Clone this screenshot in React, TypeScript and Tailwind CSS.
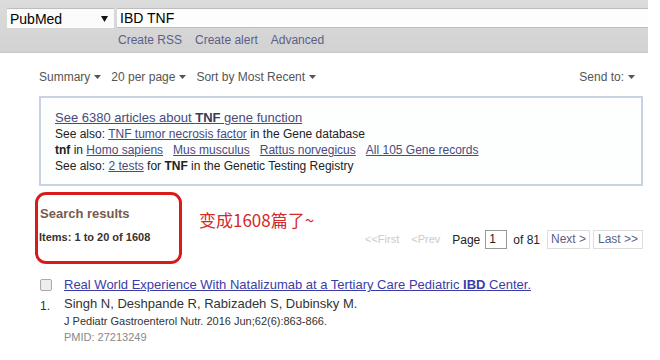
import React from 'react';

const Caret = () => (
    <svg width="7" height="4" viewBox="0 0 7 4" className="inline-block ml-[4px] mb-[1px]">
        <path d="M0 0 L7 0 L3.5 4 Z" fill="#555" />
    </svg>
);

const App = () => {
    return (
        <div className="w-[660px] h-[360px] bg-white overflow-hidden font-['Liberation_Sans',Arial,sans-serif]">
            {/* search bar */}
            <div className="w-[648px] h-[53px] bg-[#d4d4d4] border-b border-[#c6c6c6] bg-gradient-to-b from-[#dcdcdc] to-[#d2d2d2]">
                <div className="flex pt-[8px]">
                    <div className="ml-[7px] w-[107px] h-[20px] bg-[#fbfbfb] border-t border-[#bdbdbd] flex items-center justify-between pl-[3px] pr-[6px]">
                        <span className="text-[14px] text-black leading-none">PubMed</span>
                        <svg width="7" height="6" viewBox="0 0 7 6"><path d="M0 0 L7 0 L3.5 6 Z" fill="#111" /></svg>
                    </div>
                    <div className="ml-[3px] flex-1 h-[20px] bg-[#fcfdfc] border-y border-[#bdbdbd] flex items-center pl-[3px]">
                        <span className="text-[14px] text-black leading-none">IBD TNF</span>
                    </div>
                </div>
                <div className="flex gap-[13px] pl-[118px] mt-[3px] text-[12px] text-[#5b5f88]">
                    <span>Create RSS</span>
                    <span>Create alert</span>
                    <span>Advanced</span>
                </div>
            </div>

            <div className="pl-[39px] pr-[17px]">
                {/* display settings */}
                <div className="flex justify-between mt-[16px] text-[12px] text-[#555] h-[16px] items-center">
                    <div className="flex gap-[10px]">
                        <span>Summary<Caret /></span>
                        <span>20 per page<Caret /></span>
                        <span>Sort by Most Recent<Caret /></span>
                    </div>
                    <span className="mr-[8px]">Send to:<Caret /></span>
                </div>

                {/* gene sensor box */}
                <div className="mt-[11px] w-[604px] h-[90px] border-2 border-[#c8d2e2] bg-[#fdfefe] pl-[14px] pt-[12px] text-[12px] leading-[16px] text-[#222]">
                    <div className="text-[13px] leading-[16px] text-[#4a4a7c] underline">See 6380 articles about <b className="text-[#3a3a5c]">TNF</b> gene function</div>
                    <div>See also: <span className="underline text-[#4a4a7c]">TNF tumor necrosis factor</span> in the Gene database</div>
                    <div>
                        <b>tnf</b> in <span className="underline text-[#4a4a7c]">Homo sapiens</span>
                        <span className="underline text-[#4a4a7c] ml-[10px]">Mus musculus</span>
                        <span className="underline text-[#4a4a7c] ml-[10px]">Rattus norvegicus</span>
                        <span className="underline text-[#4a4a7c] ml-[10px]">All 105 Gene records</span>
                    </div>
                    <div>See also: <span className="underline text-[#4a4a7c]">2 tests</span> for <b>TNF</b> in the Genetic Testing Registry</div>
                </div>

                {/* results header */}
                <div className="flex items-start mt-[6px]">
                    <div className="-ml-[4px] w-[147px] h-[72px] border-[3px] border-[#d91a1a] rounded-[11px] pl-[2px] pt-[11px]">
                        <div className="text-[13px] font-bold text-[#7a5a4c] leading-[16px]">Search results</div>
                        <div className="text-[11px] font-bold text-[#3a3330] mt-[9px] leading-[13px] -ml-[1px]">Items: 1 to 20 of 1608</div>
                    </div>
                    <div className="ml-[17px] mt-[18px] text-[17px] text-[#d42a2a] leading-[20px] font-['Noto_Sans_CJK_SC',sans-serif]">变成1608篇了~</div>
                    <div className="ml-auto mt-[38px] flex items-center">
                        <span className="text-[11px] text-[#cbcbcb]">&lt;&lt;First</span>
                        <span className="text-[11px] text-[#cbcbcb] ml-[12px]">&lt;Prev</span>
                        <span className="text-[12px] text-[#222] ml-[12px]">Page</span>
                        <span className="ml-[5px] w-[22px] h-[19px] border border-[#999] text-[12px] text-[#222] pl-[3px] leading-[17px]">1</span>
                        <span className="text-[12px] text-[#222] ml-[6px]">of 81</span>
                        <span className="ml-[7px] w-[43px] h-[19px] text-center border border-[#ddd] text-[12px] text-[#5b5f88] leading-[17px]">Next &gt;</span>
                        <span className="ml-[3px] w-[50px] h-[19px] text-center border border-[#ddd] text-[12px] text-[#5b5f88] leading-[17px]">Last &gt;&gt;</span>
                    </div>
                </div>

                {/* result item */}
                <div className="flex mt-[13px]">
                    <div className="w-[25px] flex flex-col">
                        <div className="w-[12px] h-[12px] mt-[2px] ml-[1px] rounded-[2px] border border-[#aaa] bg-[#eee]" />
                        <div className="text-[12px] text-[#333] mt-[6px] ml-[1px]">1.</div>
                    </div>
                    <div className="flex flex-col">
                        <div className="text-[13px] leading-[16px] text-[#3c3ca6] underline">Real World Experience With Natalizumab at a Tertiary Care Pediatric <b>IBD</b> Center.</div>
                        <div className="text-[13px] leading-[16px] text-[#333] mt-[3px]">Singh N, Deshpande R, Rabizadeh S, Dubinsky M.</div>
                        <div className="text-[11px] leading-[14px] text-[#333] mt-[2px]">J Pediatr Gastroenterol Nutr. 2016 Jun;62(6):863-866.</div>
                        <div className="text-[11px] leading-[14px] text-[#888] mt-[2px]">PMID: 27213249</div>
                    </div>
                </div>
            </div>
        </div>
    );
};

export default App;
